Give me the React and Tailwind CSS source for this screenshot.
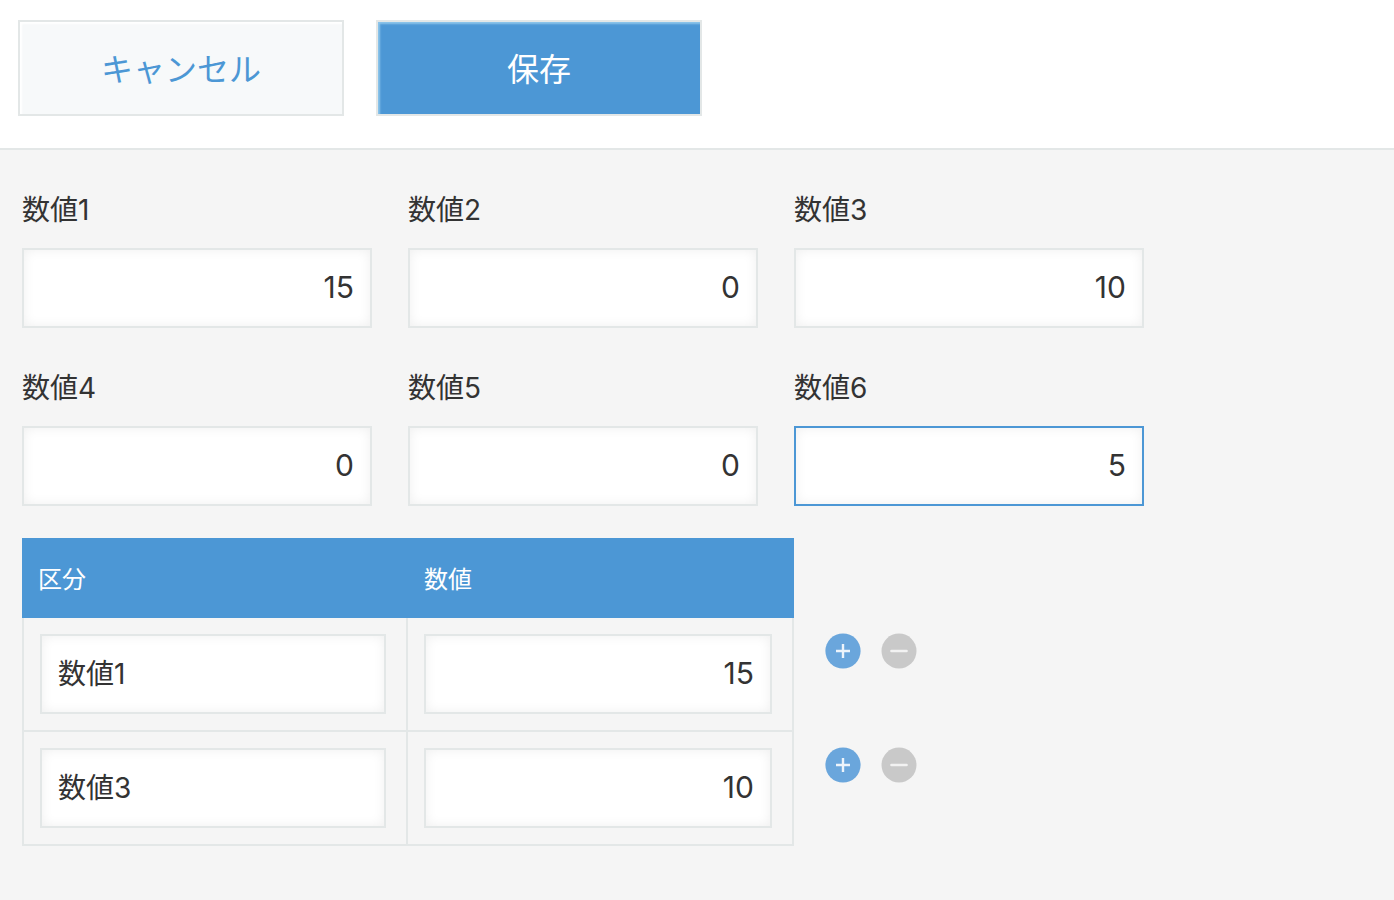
import { useState } from "react";

const FIELDS = [
  { id: "num1", label: "数値1", value: "15" },
  { id: "num2", label: "数値2", value: "0" },
  { id: "num3", label: "数値3", value: "10" },
  { id: "num4", label: "数値4", value: "0" },
  { id: "num5", label: "数値5", value: "0" },
  { id: "num6", label: "数値6", value: "5", active: true },
];

const ROWS = [
  { kind: "数値1", value: "15" },
  { kind: "数値3", value: "10" },
];

const inputBase =
  "block h-20 w-full border-2 bg-white px-4 text-[#333333] shadow-[inset_0_0_12px_#efefef] outline-none focus:border-[#4c97d5]";

function NumberInput({ value, active, ...rest }) {
  const [text, setText] = useState(value);
  return (
    <input
      type="text"
      inputMode="numeric"
      value={text}
      onChange={(e) => setText(e.target.value)}
      className={`${inputBase} pb-0.5 text-right text-[30px] ${active ? "border-[#4c97d5]" : "border-[#e3e7e7]"}`}
      {...rest}
    />
  );
}

function TextInput({ value, ...rest }) {
  const [text, setText] = useState(value);
  return (
    <input
      type="text"
      value={text}
      onChange={(e) => setText(e.target.value)}
      className={`${inputBase} border-[#e3e7e7] pb-1 text-[28px]`}
      {...rest}
    />
  );
}

function AddIcon() {
  return (
    <svg viewBox="0 0 36 36" className="size-9" aria-hidden="true">
      <circle cx="18" cy="18" r="17.6" fill="#6aa6dc" />
      <path d="M11 18h14M18 11v14" stroke="#edf4fb" strokeWidth="2.4" fill="none" />
    </svg>
  );
}

function RemoveIcon() {
  return (
    <svg viewBox="0 0 36 36" className="size-9" aria-hidden="true">
      <circle cx="18" cy="18" r="17.5" fill="#c9c9c9" />
      <path d="M10.5 18h15" stroke="#f2f2f2" strokeWidth="2.6" strokeLinecap="round" fill="none" />
    </svg>
  );
}

export default function App() {
  return (
    <div className="flex min-h-screen flex-col bg-[#f5f5f5] font-['Inter','Noto_Sans_CJK_JP',sans-serif] text-[#333333]">
      <header className="flex gap-8 border-b-2 border-[#e3e7e7] bg-white px-[18px] pt-5 pb-8">
        <button
          type="button"
          className="h-24 w-[326px] border-2 border-[#e3e7e7] bg-[#f7f9fa] pt-1 text-[32px] text-[#4c97d5] shadow-[inset_2px_2px_2px_#ffffff]"
        >
          キャンセル
        </button>
        <button
          type="button"
          className="h-24 w-[326px] border-2 border-[#e3e7e7] bg-[#4c97d5] pt-1 text-[32px] text-white shadow-[inset_2px_2px_2px_#8cc4ea]"
        >
          保存
        </button>
      </header>

      <main className="flex flex-col gap-8 px-[22px] pt-11 pb-12">
        <div className="grid max-w-[1122px] grid-cols-3 gap-x-9 gap-y-11">
          {FIELDS.map((f) => (
            <div key={f.id} className="flex flex-col gap-[22px]">
              <label htmlFor={f.id} className="text-[28px] leading-8">
                {f.label}
              </label>
              <NumberInput id={f.id} value={f.value} active={f.active} />
            </div>
          ))}
        </div>

        <table className="w-full max-w-[895px] table-fixed border-separate border-spacing-0">
          <colgroup>
            <col className="w-[386px]" />
            <col className="w-[386px]" />
            <col />
          </colgroup>
          <thead>
            <tr className="h-20 text-left text-2xl text-white">
              <th scope="col" className="bg-[#4c97d5] px-4 pt-1 font-normal">
                区分
              </th>
              <th scope="col" className="bg-[#4c97d5] px-4 pt-1 font-normal">
                数値
              </th>
              <td />
            </tr>
          </thead>
          <tbody>
            {ROWS.map((r) => (
              <tr key={r.kind}>
                <td className="border-x-2 border-b-2 border-[#e3e7e7] py-4 pr-5 pl-4">
                  <TextInput value={r.kind} aria-label="区分" />
                </td>
                <td className="border-r-2 border-b-2 border-[#e3e7e7] py-4 pr-5 pl-4">
                  <NumberInput value={r.value} aria-label="数値" />
                </td>
                <td className="pt-[15px] pl-[31px] align-top">
                  <div className="flex gap-5">
                    <button type="button" aria-label="行を追加" className="size-9 shrink-0">
                      <AddIcon />
                    </button>
                    <button type="button" aria-label="行を削除" className="size-9 shrink-0">
                      <RemoveIcon />
                    </button>
                  </div>
                </td>
              </tr>
            ))}
          </tbody>
        </table>
      </main>
    </div>
  );
}
